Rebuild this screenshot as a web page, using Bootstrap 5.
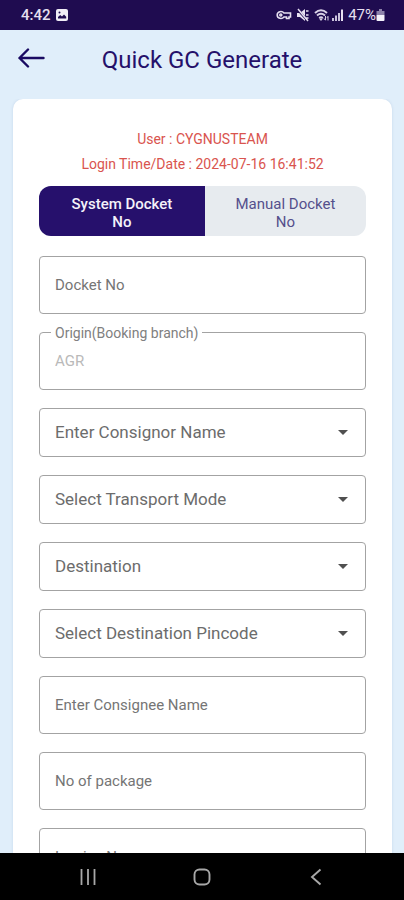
<!DOCTYPE html>
<html lang="en">
<head>
<meta charset="utf-8">
<meta name="viewport" content="width=device-width, initial-scale=1">
<title>Quick GC Generate</title>
<link href="https://cdn.jsdelivr.net/npm/bootstrap@5.3.0/dist/css/bootstrap.min.css" rel="stylesheet">
<style>
  body { font-family: Roboto, "Liberation Sans", sans-serif; background: #e0eefa; color: #24106a; }
  .status-bar { background: #1f0c50; color: #e6e0f0; height: 30px; padding: 0 19px 0 21px; font-size: 15px; line-height: 30px; }
  .app-header { height: 69px; padding: 0 17px 10px; }
  .app-header h1 { font-size: 24px; line-height: 30px; font-weight: 400; }
  .side-slot { width: 28px; }
  .app-main { min-height: 0; padding: 0 12px 0 13px; }
  .form-panel { border-radius: 10px 10px 0 0; padding: 28px 26px; box-shadow: 0 0 3px #c4d6ea; }
  .session-info { color: #d9544e; font-size: 14px; line-height: 25px; }
  .mode-switch { margin: 9px 0 20px; border-radius: 12px; background: #e7ebef; }
  .mode-switch .btn { padding: 9px 24px 5px; font-size: 15px; line-height: 18px; color: #55508c; border: 0; border-radius: 0; flex: 49 1 0; }
  .mode-switch .btn.active { background: #26106c; color: #f4f2fa; font-weight: 500; flex-grow: 51; }
  .fields { gap: 18px; }
  .fields .form-control, .fields .form-select { border: 1px solid #a3a3a3; border-radius: 4px; padding: 0 15px; background-color: #fff; }
  .fields .form-control { height: 58px; font-size: 15px; color: #6a6a6a; }
  .fields .form-control::placeholder { color: #757575; opacity: 1; }
  .fields .form-control:disabled { color: #b9b9b9; }
  .fields .form-select { height: 49px; font-size: 17px; color: #6c6c6c; background-image: url("data:image/svg+xml,%3Csvg xmlns='http://www.w3.org/2000/svg' viewBox='0 0 10 5'%3E%3Cpath d='M0 0h10L5 5z' fill='%23505050'/%3E%3C/svg%3E"); background-size: 10px 5px; background-position: right 17px center; }
  .notch-label { top: -8px; left: 12px; padding: 0 4px; font-size: 14px; line-height: 18px; color: #808080; background: #fff; }
  .system-nav { background: #000; height: 47px; padding: 0 31px; }
</style>
</head>
<body>
<div class="d-flex flex-column vh-100 overflow-hidden">
  <div class="status-bar d-flex align-items-center flex-shrink-0">
    <span class="fw-medium">4:42</span>
    <svg class="ms-1" width="14" height="14" viewBox="0 0 14 14" aria-hidden="true"><rect x="1" y="1" width="12" height="12" rx="2" fill="#f0edf6"/><path d="M3 10.500V9l2.200-2 1.800 1.500L9 6.500l2.200 2.300v1.700z" fill="#1f0c50"/><circle cx="4.500" cy="4.500" r="1" fill="#1f0c50"/></svg>
    <span class="d-flex align-items-center ms-auto">
      <svg width="16" height="14" viewBox="0 0 16 14" fill="none" stroke="#e6e0f0" stroke-width="1.600" aria-hidden="true"><path d="M8 5C6 2.600 1.200 3.200 1.200 7S6 11.400 8 9h2.500v1.500h2.500V9h1.500V5z"/><circle cx="4.800" cy="7" r="1"/></svg>
      <svg class="ms-1" width="14" height="14" viewBox="0 0 14 14" aria-hidden="true"><path d="M1 5h3l5-4v12L4 9H1z" fill="#e6e0f0"/><path d="M1 1l11 12" stroke="#1f0c50" stroke-width="2.200"/><path d="M2 1l10 12M10 3h2.500M10 7h2.500M10 10h2.500" stroke="#e6e0f0" stroke-width="1.500"/></svg>
      <svg class="ms-1" width="16" height="14" viewBox="0 0 16 14" fill="none" stroke="#d9d2e6" stroke-width="2" aria-hidden="true"><path d="M1 5Q7-.5 13 5M3 7.500q4-3.500 8 0M5.200 10q1.800-1.600 3.600 0"/><path d="M7 13l-2-2.500h4z" fill="#d9d2e6" stroke="none"/><path d="M11.500 8v4m-1.500-1.500 1.500 1.800M14 12.500V8.500m-1 1.200 1-1.400" stroke-width="1"/></svg>
      <svg class="me-1" width="14" height="14" viewBox="0 0 14 14" aria-hidden="true"><path d="M2 10h2v3H2zM5 7.500h2V13H5zM8 5h2v8H8z" fill="#c9c1dc"/><path d="M11 1.500h2V13h-2z" fill="#e6e0f0"/></svg>
      <span>47%</span>
      <svg width="9" height="14" viewBox="0 0 9 14" aria-hidden="true"><path d="M3 1h3v2h2.500v4H.5V3H3z" fill="#8d82aa"/><path d="M.5 7h8v5a1 1 0 0 1-1 1h-6a1 1 0 0 1-1-1z" fill="#f4f2fa"/></svg>
    </span>
  </div>

  <header class="app-header d-flex align-items-center flex-shrink-0">
    <button type="button" class="btn border-0 p-0 d-flex side-slot" aria-label="Back">
      <svg width="28" height="24" viewBox="0 0 28 24" fill="none" stroke="#190a62" stroke-width="2.400" stroke-linecap="round" stroke-linejoin="round"><path d="M26.500 10H2.500M11 1.500L2.500 10l8.500 8.500"/></svg>
    </button>
    <h1 class="flex-grow-1 text-center m-0">Quick GC Generate</h1>
    <span class="side-slot"></span>
  </header>

  <main class="app-main flex-grow-1 overflow-hidden">
    <div class="form-panel bg-white">
      <div class="session-info text-center">
        <div>User : CYGNUSTEAM</div>
        <div>Login Time/Date : 2024-07-16 16:41:52</div>
      </div>

      <div class="mode-switch d-flex overflow-hidden" role="group" aria-label="Docket number type">
        <button type="button" class="btn active" aria-pressed="true">System Docket<br>No</button>
        <button type="button" class="btn" aria-pressed="false">Manual Docket<br>No</button>
      </div>

      <form class="fields d-flex flex-column">
        <input class="form-control" type="text" placeholder="Docket No" aria-label="Docket No">
        <div class="position-relative">
          <label class="notch-label position-absolute" for="origin">Origin(Booking branch)</label>
          <input id="origin" class="form-control" type="text" value="AGR" disabled>
        </div>
        <select class="form-select" aria-label="Consignor name"><option>Enter Consignor Name</option></select>
        <select class="form-select" aria-label="Transport mode"><option>Select Transport Mode</option></select>
        <select class="form-select" aria-label="Destination"><option>Destination</option></select>
        <select class="form-select" aria-label="Destination pincode"><option>Select Destination Pincode</option></select>
        <input class="form-control" type="text" placeholder="Enter Consignee Name" aria-label="Enter Consignee Name">
        <input class="form-control" type="text" placeholder="No of package" aria-label="No of package">
        <input class="form-control" type="text" placeholder="Invoice No" aria-label="Invoice No">
      </form>
    </div>
  </main>

  <nav class="system-nav d-flex align-items-center flex-shrink-0" aria-label="System">
    <button type="button" class="btn border-0 p-0 flex-fill d-flex justify-content-center" aria-label="Recent apps">
      <svg width="18" height="18" viewBox="0 0 18 18" stroke="#a8a8a8" stroke-width="1.800"><path d="M2.500 1v16M9 1v16M15.500 1v16"/></svg>
    </button>
    <button type="button" class="btn border-0 p-0 flex-fill d-flex justify-content-center" aria-label="Home">
      <svg width="18" height="18" viewBox="0 0 18 18" fill="none" stroke="#a8a8a8" stroke-width="1.900"><rect x="1.500" y="1.500" width="15" height="15" rx="5"/></svg>
    </button>
    <button type="button" class="btn border-0 p-0 flex-fill d-flex justify-content-center" aria-label="Back">
      <svg width="18" height="18" viewBox="0 0 18 18" fill="none" stroke="#a8a8a8" stroke-width="1.900"><path d="M13.500 1.500L5 9l8.500 7.500"/></svg>
    </button>
  </nav>
</div>
<script src="https://cdn.jsdelivr.net/npm/bootstrap@5.3.0/dist/js/bootstrap.bundle.min.js"></script>
</body>
</html>
